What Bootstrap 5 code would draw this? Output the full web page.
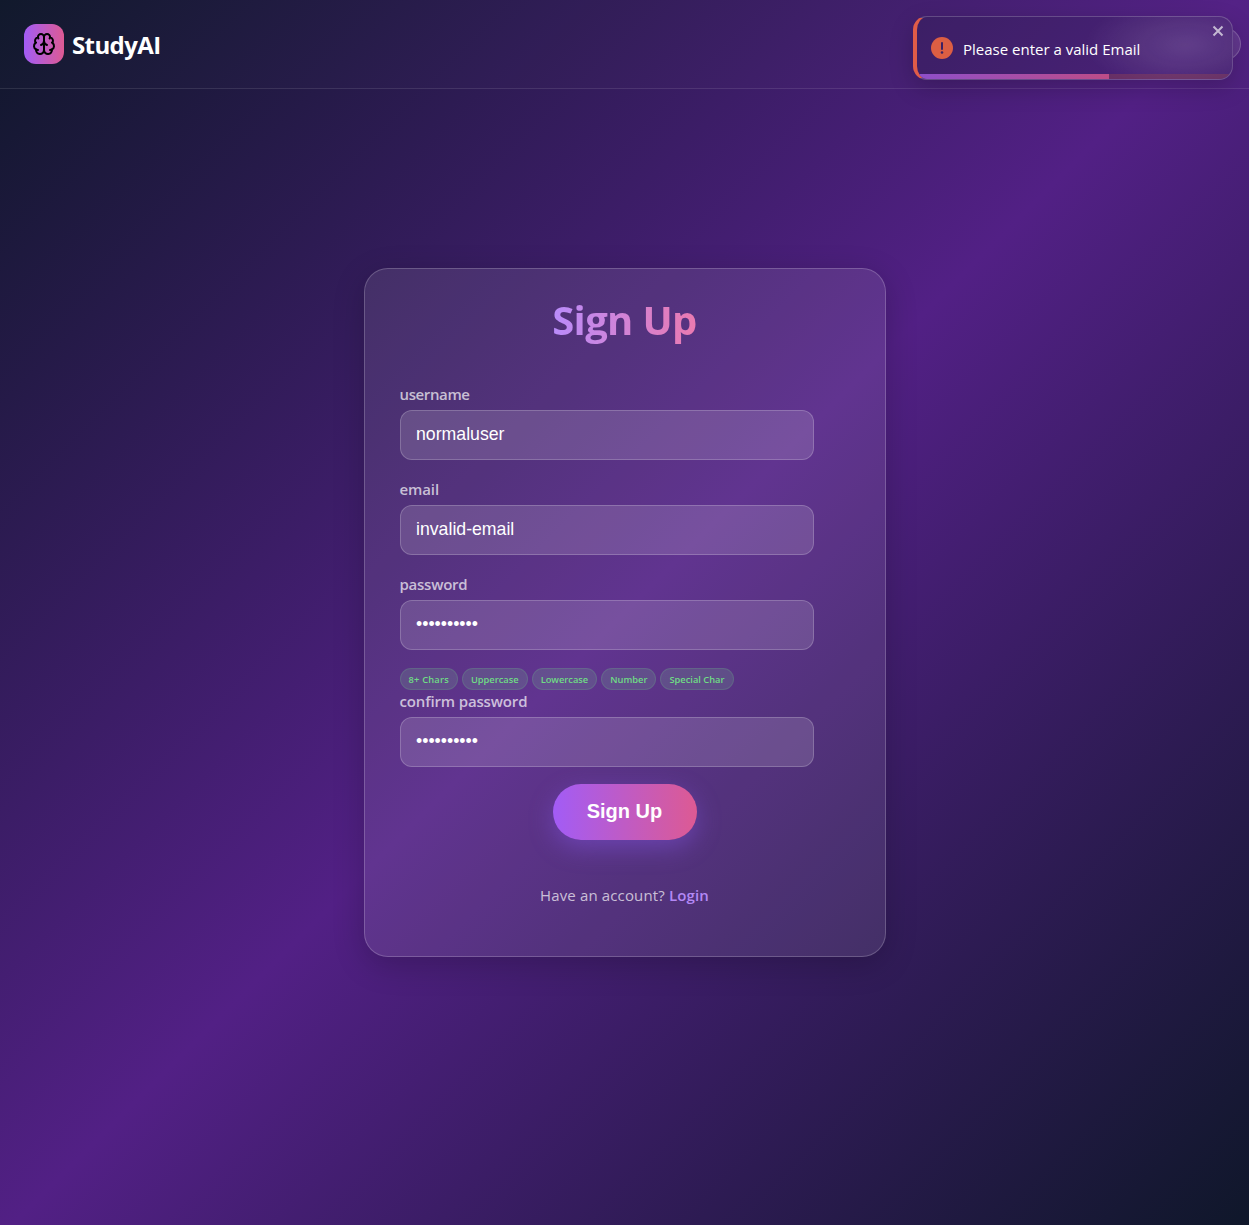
<!DOCTYPE html>
<html lang="en">
<head>
<meta charset="utf-8">
<meta name="viewport" content="width=device-width, initial-scale=1">
<title>StudyAI - Sign Up</title>
<link rel="stylesheet" href="https://cdn.jsdelivr.net/npm/bootstrap@5.3.0/dist/css/bootstrap.min.css">
<style>
body{font-family:"Open Sans","Noto Sans",sans-serif;color:#fff;background:linear-gradient(135deg,#0f172a 0%,#522085 50%,#0f172a 100%);min-height:1225px;overflow:hidden}
.topbar{height:89px;border-bottom:1px solid rgba(255,255,255,.1);padding:0 8px 0 24px;background:rgba(255,255,255,.01)}
.logo-tile{width:40px;height:40px;border-radius:12px;background:linear-gradient(90deg,#a25cf6,#dd5a93)}
.logo-name{font-size:24px;font-weight:700;letter-spacing:-.6px;line-height:40px;padding-top:2px}
.pill-link{width:114px;height:32px;border-radius:30px;border:1px solid rgba(255,255,255,.2);background:rgba(255,255,255,.1);clip-path:inset(0 0 0 106px)}
.stage{height:1136px;padding-top:179px}
.glass{width:522px;height:689px;border:1px solid rgba(255,255,255,.2);border-radius:24px;background:rgba(255,255,255,.09);box-shadow:0 8px 32px rgba(0,0,0,.2);padding:23px 35px}
.headline{font-size:40px;font-weight:700;line-height:56px;letter-spacing:-.65px;background:linear-gradient(90deg,#b98cfb,#ea7ab0);-webkit-background-clip:text;background-clip:text;color:transparent}
.field-name{font-size:15px;font-weight:650;line-height:24px;color:rgba(255,255,255,.7);letter-spacing:-.38px;margin-bottom:4px}
.name-email{letter-spacing:-.1px}
.name-pass{letter-spacing:-.25px}
.name-confirm{letter-spacing:-.15px}
.first-group{margin-top:34px}
.gapped{margin-top:17px}
.chips{margin:18px 0 -1px}
.glass-input,.glass-input:focus{width:414px;height:50px;border-radius:12px;border:1px solid rgba(255,255,255,.2);background:rgba(255,255,255,.14);color:#fff;font:17.7px "Liberation Sans",sans-serif;padding:0 16px 2px 15.5px}
.rule-chip{height:22px;border-radius:12px;border:1px solid rgba(110,231,133,.14);background:rgba(110,150,145,.28);color:#6fdc85;font-size:9.3px;font-weight:600;padding:0 8px;line-height:21px}
.rule-chip:first-child{letter-spacing:.2px}
.cta{width:144px;height:56px;border-radius:28px;border:0;background:linear-gradient(90deg,#a25cf6,#dd5a93);color:#fff;font:700 20px "Liberation Sans",sans-serif;box-shadow:0 8px 24px rgba(139,92,246,.4);padding:0 0 2px;margin-top:17px}
.foot{font-size:15px;line-height:24px;color:rgba(255,255,255,.7);letter-spacing:.14px;margin-top:43px}
.foot a{color:#b388f5;font-weight:600}
.notice{position:absolute;left:913px;top:16px;width:320px;height:64px;border:1px solid rgba(255,255,255,.2);border-left:4px solid #e05c48;border-radius:14px;background:radial-gradient(ellipse 100px 46px at 268px 28px,rgba(255,255,255,.13),rgba(255,255,255,.08) 45%,transparent),rgba(30,30,60,.2);box-shadow:0 8px 24px rgba(0,0,0,.2);overflow:hidden;padding-left:14px}
.notice-icon{margin-right:10px}
.notice-text{font-size:15px;margin-top:2px}
.close-x{position:absolute;right:8px;top:8px}
.track{position:absolute;left:0;bottom:0;width:100%;height:5px;background:rgba(150,70,80,.42)}
.track-fill{height:5px;background:linear-gradient(90deg,#8e4fca,#bd4c87)}
</style>
</head>
<body>
<nav class="topbar d-flex align-items-center justify-content-between">
  <div class="d-flex align-items-center gap-2">
    <div class="logo-tile d-flex align-items-center justify-content-center">
      <svg width="24" height="24" viewBox="0 0 24 24" fill="none" stroke="#000" stroke-width="2" stroke-linecap="round" stroke-linejoin="round"><path d="M12 5a3 3 0 1 0-5.997.125 4 4 0 0 0-2.526 5.77 4 4 0 0 0 .556 6.588A4 4 0 1 0 12 18Z"/><path d="M12 5a3 3 0 1 1 5.997.125 4 4 0 0 1 2.526 5.77 4 4 0 0 1-.556 6.588A4 4 0 1 1 12 18Z"/><path d="M15 13a4.5 4.5 0 0 1-3-4 4.5 4.5 0 0 1-3 4"/><path d="M17.599 6.5a3 3 0 0 0 .399-1.375M6.003 5.125A3 3 0 0 0 6.401 6.5M3.477 10.896a4 4 0 0 1 .585-.396M19.938 10.5a4 4 0 0 1 .585.396M6 18a4 4 0 0 1-1.967-.516M19.967 17.484A4 4 0 0 1 18 18"/></svg>
    </div>
    <span class="logo-name">StudyAI</span>
  </div>
  <div class="pill-link"></div>
</nav>
<main class="stage d-flex justify-content-center align-items-start">
  <form class="glass d-flex flex-column">
    <h1 class="headline align-self-center mb-0">Sign Up</h1>
    <div class="d-flex flex-column align-items-start first-group">
      <label class="field-name" for="u">username</label>
      <input class="form-control glass-input" id="u" type="text" value="normaluser">
    </div>
    <div class="d-flex flex-column align-items-start gapped">
      <label class="field-name name-email" for="e">email</label>
      <input class="form-control glass-input" id="e" type="text" value="invalid-email">
    </div>
    <div class="d-flex flex-column align-items-start gapped">
      <label class="field-name name-pass" for="p">password</label>
      <input class="form-control glass-input" id="p" type="password" value="Passw0rd!x">
    </div>
    <div class="d-flex gap-1 chips">
      <span class="rule-chip">8+ Chars</span><span class="rule-chip">Uppercase</span><span class="rule-chip">Lowercase</span><span class="rule-chip">Number</span><span class="rule-chip">Special Char</span>
    </div>
    <div class="d-flex flex-column align-items-start">
      <label class="field-name name-confirm" for="c">confirm password</label>
      <input class="form-control glass-input" id="c" type="password" value="Passw0rd!x">
    </div>
    <button class="btn cta align-self-center" type="button">Sign Up</button>
    <p class="foot text-center mb-0">Have an account? <a class="text-decoration-none" href="#">Login</a></p>
  </form>
</main>
<div class="notice d-flex align-items-center" role="alert">
  <svg width="22" height="22" viewBox="0 0 22 22" class="notice-icon"><circle cx="11" cy="11" r="11" fill="#dc5e43"/><path d="M11 6v6" stroke="#3d2063" stroke-width="2" stroke-linecap="round"/><circle cx="11" cy="15.5" r="1.3" fill="#3d2063"/></svg>
  <span class="notice-text">Please enter a valid Email</span>
  <svg class="close-x" width="12" height="12" viewBox="0 0 12 12"><path d="M1.500 1.500l9 9M10.500 1.500l-9 9" stroke="#c4b9d2" stroke-width="2"/></svg>
  <div class="track"><div class="track-fill" style="width:61%"></div></div>
</div>
<script src="https://cdn.jsdelivr.net/npm/bootstrap@5.3.0/dist/js/bootstrap.bundle.min.js"></script>
</body>
</html>
